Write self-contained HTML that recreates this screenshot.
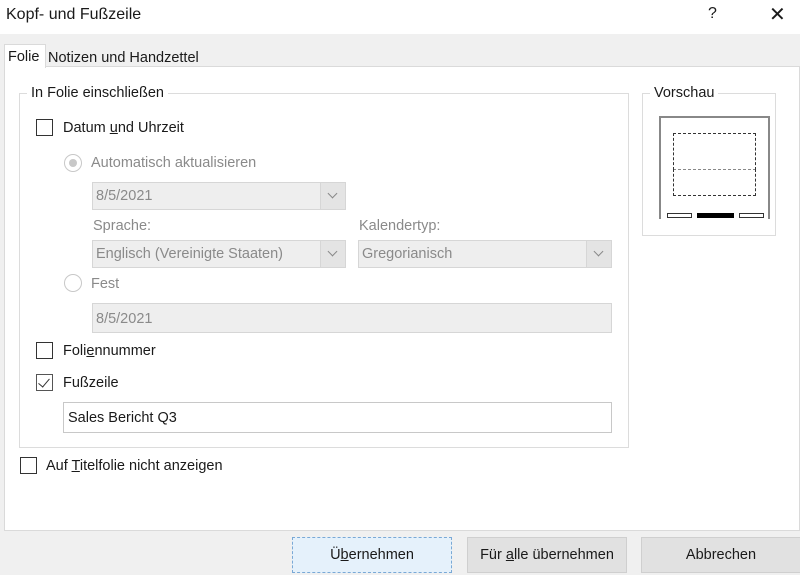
<!DOCTYPE html>
<html><head><meta charset="utf-8"><style>
*{box-sizing:border-box;margin:0;padding:0}
body{width:800px;height:575px;overflow:hidden;background:#f0f0f0;font-family:"Liberation Sans",sans-serif;font-size:14.5px;color:#1a1a1a;position:relative}
.a{position:absolute;white-space:nowrap}
.cb{position:absolute;width:17px;height:17px;border:1px solid #333;background:#fff}
.dis{color:#8a8a8a}
.sel{position:absolute;height:28px;background:#eeeeee;border:1px solid #d6d6d6;color:#8a8a8a;padding:5px 0 0 3px}
.sel .ar{position:absolute;right:0;top:0;width:25px;height:26px;border-left:1px solid #d6d6d6;background:#e4e4e4}
.sel .ar:after{content:"";position:absolute;left:8px;top:7px;width:6px;height:6px;border-right:1px solid #888;border-bottom:1px solid #888;transform:rotate(45deg)}
.rad{position:absolute;width:18px;height:18px;border-radius:50%;border:1px solid #c8c8c8;background:#fff}
.btn{position:absolute;top:537px;height:36px;background:#e1e1e1;border:1px solid #cfcfcf;text-align:center;line-height:34px}
</style></head><body>
<div class="a" style="left:0;top:0;width:800px;height:34px;background:#fff"></div>
<div class="a" style="left:6px;top:6px;font-size:16px">Kopf- und Fußzeile</div>
<div class="a" style="left:708px;top:5px;font-size:16px">?</div>
<div class="a" style="left:769px;top:2px;font-size:20px">✕</div>
<div class="a" style="left:4px;top:66px;width:796px;height:465px;background:#fff;border:1px solid #dadada"></div>
<div class="a" style="left:4px;top:44px;width:42px;height:24px;background:#fff;border:1px solid #dadada;border-bottom:none"></div>
<div class="a" style="left:8px;top:49px">Folie</div>
<div class="a" style="left:48px;top:50px">Notizen und Handzettel</div>

<div class="a" style="left:19px;top:93px;width:610px;height:355px;border:1px solid #dcdcdc"></div>
<div class="a" style="left:27px;top:85px;background:#fff;padding:0 4px">In Folie einschließen</div>
<div class="cb" style="left:36px;top:119px"></div>
<div class="a" style="left:63px;top:120px">Datum <u>u</u>nd Uhrzeit</div>
<div class="rad" style="left:64px;top:154px"><div style="position:absolute;left:4px;top:4px;width:8px;height:8px;border-radius:50%;background:#c8c8c8"></div></div>
<div class="a dis" style="left:91px;top:155px">Automatisch aktualisieren</div>
<div class="sel" style="left:92px;top:182px;width:254px">8/5/2021<div class="ar"></div></div>
<div class="a dis" style="left:93px;top:218px">Sprache:</div>
<div class="sel" style="left:92px;top:240px;width:254px">Englisch (Vereinigte Staaten)<div class="ar"></div></div>
<div class="a dis" style="left:359px;top:218px">Kalendertyp:</div>
<div class="sel" style="left:358px;top:240px;width:254px">Gregorianisch<div class="ar"></div></div>
<div class="rad" style="left:64px;top:274px"></div>
<div class="a dis" style="left:91px;top:276px">Fest</div>
<div class="sel" style="left:92px;top:303px;width:520px;height:30px;padding-top:7px">8/5/2021</div>
<div class="cb" style="left:36px;top:342px"></div>
<div class="a" style="left:63px;top:343px">Foli<u>e</u>nnummer</div>
<div class="cb" style="left:36px;top:374px;border-color:#555"><div style="position:absolute;left:4px;top:1px;width:6px;height:11px;border-right:1px solid #333;border-bottom:1px solid #333;transform:rotate(40deg)"></div></div>
<div class="a" style="left:63px;top:375px">Fußzeile</div>
<div class="a" style="left:63px;top:402px;width:549px;height:31px;border:1px solid #c8c8c8;padding:7px 0 0 4px">Sales Bericht Q3</div>
<div class="cb" style="left:20px;top:457px"></div>
<div class="a" style="left:46px;top:458px">Auf <u>T</u>itelfolie nicht anzeigen</div>

<div class="a" style="left:642px;top:93px;width:134px;height:143px;border:1px solid #dcdcdc"></div>
<div class="a" style="left:650px;top:85px;background:#fff;padding:0 4px">Vorschau</div>
<div class="a" style="left:659px;top:116px;width:111px;height:103px;border-top:2px solid #888;border-left:2px solid #888;border-right:2px solid #888"></div>
<div class="a" style="left:673px;top:133px;width:83px;height:37px;border:1px dashed #333;border-bottom:1px dashed #888"></div>
<div class="a" style="left:673px;top:169px;width:83px;height:27px;border:1px dashed #333;border-top:none"></div>
<div class="a" style="left:667px;top:213px;width:25px;height:5px;border:1px solid #333"></div>
<div class="a" style="left:697px;top:213px;width:37px;height:5px;background:#000"></div>
<div class="a" style="left:739px;top:213px;width:25px;height:5px;border:1px solid #333"></div>

<div class="btn" style="left:292px;width:160px;background:#e5f1fb;border:1px dashed #7aa9d6">Ü<u>b</u>ernehmen</div>
<div class="btn" style="left:467px;width:160px">Für <u>a</u>lle übernehmen</div>
<div class="btn" style="left:641px;width:160px">Abbrechen</div>
</body></html>
